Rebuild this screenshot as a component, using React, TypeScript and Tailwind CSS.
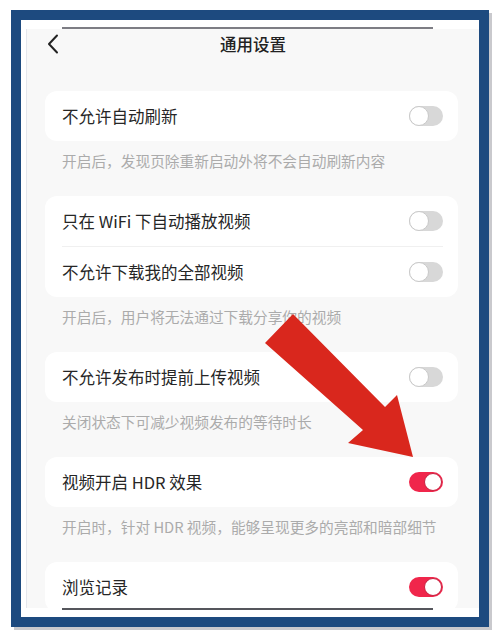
const font = { fontFamily: '"Noto Sans CJK SC", "Noto Sans", sans-serif' };

function Toggle({ on }: { on?: boolean }) {
  return on ? (
    <div className="w-[34px] h-[20px] rounded-full bg-[#f0264b] flex items-center justify-end p-[1px]">
      <div className="w-[18px] h-[18px] rounded-full bg-white border border-[#c8203f]" />
    </div>
  ) : (
    <div className="w-[34px] h-[20px] rounded-full bg-[#d8d8d8] flex items-center">
      <div className="w-[20px] h-[20px] rounded-full bg-white border border-[#c9c9c9]" />
    </div>
  );
}

function Row({ label, on }: { label: string; on?: boolean }) {
  return (
    <div className="h-[50px] flex items-center justify-between pl-[17px] pr-[15px]">
      <span className="text-[16.5px] text-[#262626]">{label}</span>
      <Toggle on={on} />
    </div>
  );
}

function Desc({ text }: { text: string }) {
  return (
    <div className="h-[55px] pt-[10px] pl-[17px] text-[14.7px] leading-[20px] text-[#ababab]">{text}</div>
  );
}

export default function App() {
  return (
    <div className="relative w-[500px] h-[640px] bg-white pt-[10px] pl-[11px]" style={font}>
      <div className="w-[478px] h-[617px] bg-[#1d4a7f] p-[10px] shadow-[3px_3px_0_#c9c9cd]">
        <div className="w-full h-full bg-white flex flex-col">
          <div className="h-[7px]" />
          <div className="h-[2px] bg-[#7d7d84] ml-[41px] w-[371px]" />
          <div className="flex-1 bg-[#f8f8f8] overflow-hidden border-l border-[#e4e6ec] ml-[5px]">
            <div className="h-[30px] relative flex items-center justify-center">
              <svg className="absolute left-[20px] top-[5px]" width="12" height="20" viewBox="0 0 12 20">
                <path d="M10 1.5 L2 10 L10 18.5" fill="none" stroke="#222" strokeWidth="2" strokeLinecap="round" strokeLinejoin="round" />
              </svg>
              <span className="text-[16.5px] font-medium text-[#222]">通用设置</span>
            </div>
            <div className="pl-[18px] pr-[21px] pt-[32px]">
              <div className="bg-white rounded-[12px]">
                <Row label="不允许自动刷新" />
              </div>
              <Desc text="开启后，发现页除重新启动外将不会自动刷新内容" />
              <div className="bg-white rounded-[12px]">
                <Row label="只在 WiFi 下自动播放视频" />
                <div className="h-px bg-[#f0f0f0] ml-[17px] mr-[15px]" />
                <Row label="不允许下载我的全部视频" />
              </div>
              <Desc text="开启后，用户将无法通过下载分享你的视频" />
              <div className="bg-white rounded-[12px]">
                <Row label="不允许发布时提前上传视频" />
              </div>
              <Desc text="关闭状态下可减少视频发布的等待时长" />
              <div className="bg-white rounded-[12px]">
                <Row label="视频开启 HDR 效果" on />
              </div>
              <Desc text="开启时，针对 HDR 视频，能够呈现更多的亮部和暗部细节" />
              <div className="bg-white rounded-[12px]">
                <Row label="浏览记录" on />
              </div>
            </div>
          </div>
          <div className="h-[2px] bg-[#55565c] ml-[41px] w-[371px]" />
          <div className="h-[7px]" />
        </div>
      </div>
      <svg className="absolute inset-0 pointer-events-none" width="500" height="640" viewBox="0 0 500 640">
        <polygon
          points="293,314 385,407 397,395 413,457 348,443 363,430 265,343"
          fill="#d9271d"
        />
      </svg>
    </div>
  );
}
